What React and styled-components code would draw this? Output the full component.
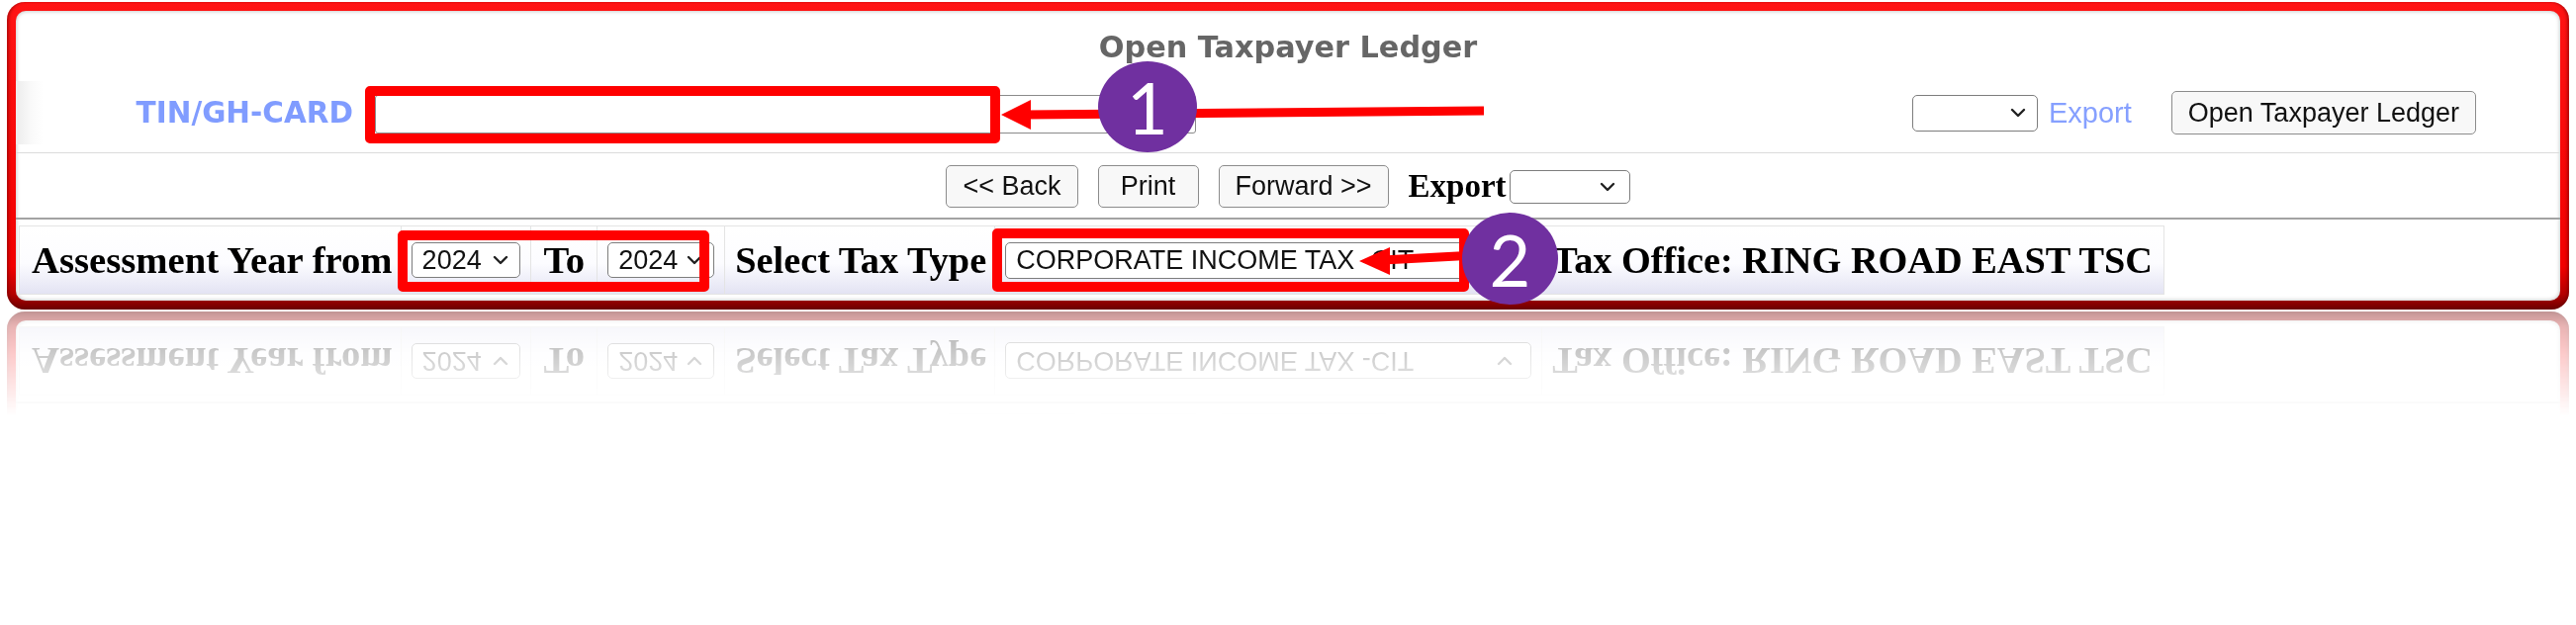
import React from 'react';
import styled, { createGlobalStyle } from 'styled-components';

/* ---------------------------------- Styles ---------------------------------- */
const GlobalStyle = createGlobalStyle`
  html, body {
    margin: 0;
    padding: 0;
    background: #fff;
  }
  body {
    width: 2604px;
    height: 632px;
    overflow: hidden;
    font-family: "Liberation Sans", Arial, sans-serif;
  }
`;

const Page = styled.div`
  position: relative;
  width: 2604px;
  height: 632px;
  box-sizing: border-box;
  padding: 2px 0 0 7px;
`;

const Frame = styled.div`
  width: 2590px;
  box-sizing: border-box;
  padding: 9px;
  border-radius: 18px;
  background: linear-gradient(to bottom, #ff1414 0%, #f20000 86%, #b40000 95%, #6c0000 100%);
  box-shadow: inset 3px 0 3px -1px rgba(90, 0, 0, 0.45), inset -3px 0 3px -1px rgba(90, 0, 0, 0.45);
  -webkit-box-reflect: below 2px
    linear-gradient(to bottom, transparent 66%, rgba(0, 0, 0, 0.3) 95.5%, rgba(0, 0, 0, 0.42) 100%);
`;

const Sheet = styled.div`
  height: 293px;
  display: flex;
  flex-direction: column;
  background: #fff;
  border-radius: 10px;
  box-shadow: inset 0 0 4px rgba(0, 0, 0, 0.3);
  overflow: hidden;
`;

const TitleBar = styled.div`
  height: 65px;
  box-sizing: border-box;
  padding-top: 7px;
  display: flex;
  align-items: center;
  justify-content: center;
`;

const Title = styled.h1`
  margin: 0;
  font-family: "DejaVu Sans", Verdana, sans-serif;
  font-size: 30.3px;
  font-weight: bold;
  color: #666;
`;

const SearchRow = styled.div`
  height: 79px;
  box-sizing: border-box;
  padding: 0 85px 2px 0;
  display: flex;
  align-items: center;
  border-bottom: 1px solid #dcdcdc;
`;

const LabelCell = styled.div`
  width: 352px;
  height: 64px;
  box-sizing: border-box;
  padding-right: 11px;
  display: flex;
  align-items: center;
  justify-content: flex-end;
  background: linear-gradient(to right, #ececec, #fafafa 16px, #fff 28px);
`;

const BlueLabel = styled.span`
  font-family: "DejaVu Sans", Verdana, sans-serif;
  font-size: 29.5px;
  font-weight: bold;
  color: #809cff;
`;

const TinInput = styled.input`
  width: 830px;
  height: 39px;
  margin: 2px 0 0 11px;
  box-sizing: border-box;
  border: 1px solid #8a8a8a;
  border-radius: 3px;
  outline: none;
`;

const Spacer = styled.div`
  flex: 1;
`;

const FakeSelect = styled.div`
  width: ${p => p.$w}px;
  height: ${p => p.$h}px;
  box-sizing: border-box;
  padding: 0 ${p => p.$pr || 11}px 0 10px;
  display: inline-flex;
  align-items: center;
  justify-content: space-between;
  background: #fff;
  border: 1.5px solid #7d7d7d;
  border-radius: 5px;
  font-family: "Liberation Sans", Arial, sans-serif;
  font-size: 27px;
  color: #111;
  flex-shrink: 0;
`;

const LinkText = styled.span`
  margin: 0 40px 0 11px;
  font-family: "Liberation Sans", Arial, sans-serif;
  font-size: 29px;
  color: #86a0ff;
`;

const Button = styled.button`
  height: ${p => p.$h || 43}px;
  min-width: ${p => p.$minW || 0}px;
  padding: 0 16px;
  box-sizing: border-box;
  background: #f8f8f8;
  border: 1.5px solid #8c8c8c;
  border-radius: 5px;
  font-family: "Liberation Sans", Arial, sans-serif;
  font-size: 27px;
  color: #111;
  flex-shrink: 0;
`;

const NavRow = styled.div`
  height: 67px;
  box-sizing: border-box;
  padding-top: 2px;
  display: flex;
  align-items: center;
  justify-content: center;
  gap: 20px;
  border-bottom: 2px solid #a3a3a3;
`;

const ExportGroup = styled.div`
  display: flex;
  align-items: center;
  gap: 3px;
`;

const SerifLabel = styled.span`
  font-family: "Liberation Serif", "Times New Roman", serif;
  font-size: ${p => p.$size || 38.7}px;
  font-weight: bold;
  color: #000;
  white-space: nowrap;
`;

const FilterArea = styled.div`
  flex: 1;
  padding: 6px 0 0 3px;
  display: flex;
  align-items: flex-start;
`;

const FilterCell = styled.div`
  height: 70px;
  box-sizing: border-box;
  padding: 0 ${p => p.$pr ?? 10}px 0 ${p => p.$pl ?? 10}px;
  display: flex;
  align-items: center;
  background: linear-gradient(to bottom, #fff 0%, #fcfcff 55%, #e3e3f3 100%);
  border: 1px solid #e4e4e4;
  border-left: ${p => (p.$first ? '1px solid #e4e4e4' : 'none')};
`;

const MarkBox = styled.div`
  position: absolute;
  left: ${p => p.$x}px;
  top: ${p => p.$y}px;
  width: ${p => p.$w}px;
  height: ${p => p.$h}px;
  box-sizing: border-box;
  border: 10px solid #ff0000;
  border-radius: 5px;
`;

const ArrowLayer = styled.svg`
  position: absolute;
  left: 0;
  top: 0;
  pointer-events: none;
`;

const Badge = styled.div`
  position: absolute;
  left: ${p => p.$x}px;
  top: ${p => p.$y}px;
  width: ${p => p.$w}px;
  height: ${p => p.$h}px;
  border-radius: 50%;
  background: #7030a0;
  color: #fff;
  display: flex;
  align-items: center;
  justify-content: center;
  font-family: Lato, "Open Sans", sans-serif;
  font-size: 72px;
  line-height: 1;
`;

/* -------------------------------- Components -------------------------------- */
const Chevron = () => (
  <svg width="16" height="10" viewBox="0 0 16 10">
    <polyline points="2,2 8,8 14,2" fill="none" stroke="#222" strokeWidth="2.4" strokeLinecap="round" strokeLinejoin="round" />
  </svg>
);

const Select = ({ value, w, h, pr }) => (
  <FakeSelect $w={w} $h={h} $pr={pr}>
    <span>{value}</span>
    <Chevron />
  </FakeSelect>
);

const App = () => (
  <Page>
    <GlobalStyle />
    <Frame>
      <Sheet>
        <TitleBar>
          <Title>Open Taxpayer Ledger</Title>
        </TitleBar>

        <SearchRow>
          <LabelCell>
            <BlueLabel>TIN/GH-CARD</BlueLabel>
          </LabelCell>
          <TinInput type="text" />
          <Spacer />
          <Select value="" w={127} h={37} />
          <LinkText>Export</LinkText>
          <Button $h={44}>Open Taxpayer Ledger</Button>
        </SearchRow>

        <NavRow>
          <Button>&lt;&lt; Back</Button>
          <Button $minW={102}>Print</Button>
          <Button>Forward &gt;&gt;</Button>
          <ExportGroup>
            <SerifLabel $size={33}>Export</SerifLabel>
            <Select value="" w={122} h={34} pr={14} />
          </ExportGroup>
        </NavRow>

        <FilterArea>
          <FilterCell $first $pl={12} $pr={8}>
            <SerifLabel>Assessment Year from</SerifLabel>
          </FilterCell>
          <FilterCell>
            <Select value="2024" w={110} h={36} />
          </FilterCell>
          <FilterCell $pl={13} $pr={12}>
            <SerifLabel>To</SerifLabel>
          </FilterCell>
          <FilterCell>
            <Select value="2024" w={108} h={36} />
          </FilterCell>
          <FilterCell $pr={8}>
            <SerifLabel $size={38.3}>Select Tax Type</SerifLabel>
          </FilterCell>
          <FilterCell>
            <Select value="CORPORATE INCOME TAX -CIT" w={532} h={37} pr={18} />
          </FilterCell>
          <FilterCell $pr={11}>
            <SerifLabel $size={38.3}>Tax Office: RING ROAD EAST TSC</SerifLabel>
          </FilterCell>
        </FilterArea>
      </Sheet>
    </Frame>

    {/* annotations laid over the page */}
    <MarkBox $x={369} $y={87} $w={642} $h={58} />
    <MarkBox $x={402} $y={233} $w={315} $h={62} />
    <MarkBox $x={1003} $y={231} $w={482} $h={64} />

    <ArrowLayer width="2604" height="632" viewBox="0 0 2604 632">
      <line x1="1500" y1="112" x2="1036" y2="116" stroke="#ff0000" strokeWidth="9" />
      <polygon points="1012,116 1042,101 1042,131" fill="#ff0000" />
      <line x1="1492" y1="258" x2="1398" y2="263" stroke="#ff0000" strokeWidth="9" />
      <polygon points="1374,264 1405,250 1405,278" fill="#ff0000" />
    </ArrowLayer>

    <Badge $x={1110} $y={62} $w={100} $h={92}>1</Badge>
    <Badge $x={1478} $y={215} $w={97} $h={93}>2</Badge>
  </Page>
);

export default App;
